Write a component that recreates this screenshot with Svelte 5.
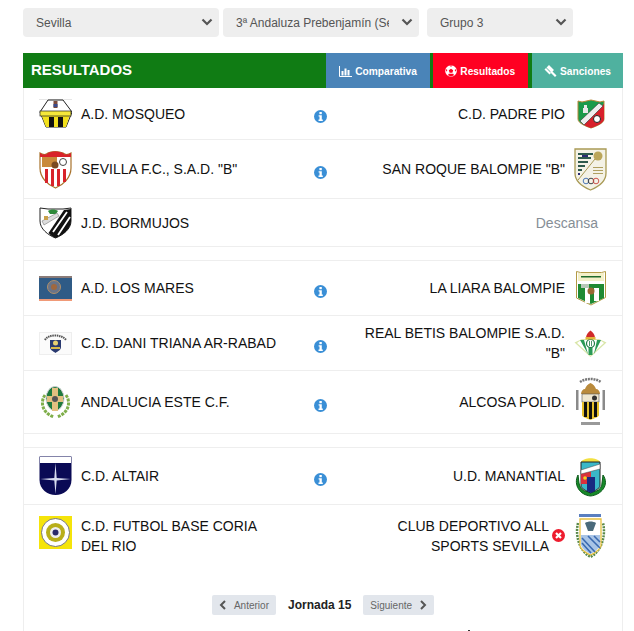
<script>
  const selects = [
    { cls: 'w1', options: ['Sevilla'] },
    { cls: 'w2', options: ['3ª Andaluza Prebenjamín (Sevilla)'] },
    { cls: 'w3', options: ['Grupo 3'] }
  ];
  const groups = [
    [
      { h: 52, home: 'A.D. MOSQUEO', hl: 'mosqueo', away: 'C.D. PADRE PIO', al: 'padre', status: 'info' },
      { h: 59, home: 'SEVILLA F.C., S.A.D. "B"', hl: 'sevilla', away: 'SAN ROQUE BALOMPIE "B"', al: 'roque', status: 'info' },
      { h: 48, home: 'J.D. BORMUJOS', hl: 'bormujos', rest: true }
    ],
    [
      { h: 55, home: 'A.D. LOS MARES', hl: 'mares', away: 'LA LIARA BALOMPIE', al: 'liara', status: 'info' },
      { h: 55, home: 'C.D. DANI TRIANA AR-RABAD', hl: 'dani', away: 'REAL BETIS BALOMPIE S.A.D. "B"', al: 'betis', status: 'info' },
      { h: 63, home: 'ANDALUCIA ESTE C.F.', hl: 'este', away: 'ALCOSA POLID.', al: 'alcosa', status: 'info' }
    ],
    [
      { h: 57, home: 'C.D. ALTAIR', hl: 'altair', away: 'U.D. MANANTIAL', al: 'manantial', status: 'info' },
      { h: 61, last: true, home: 'C.D. FUTBOL BASE CORIA DEL RIO', hl: 'coria', away: 'CLUB DEPORTIVO ALL SPORTS SEVILLA', al: 'allsports', status: 'x' }
    ]
  ];
</script>

{#snippet logo(name)}
  {#if name === 'mosqueo'}
    <svg class="logo" width="33" height="29" viewBox="0 0 33 29">
      <rect x="0" y="0" width="33" height="1" fill="#e6e6e6"/>
      <path d="M9 1h15l9 12-6 15H7L1 13z" fill="#fff" stroke="#222" stroke-width="1"/>
      <path d="M1 12h31l-5 16H7z" fill="#f2e01c"/>
      <rect x="1" y="12" width="31" height="5" fill="#f5e83a" stroke="#222" stroke-width=".7"/>
      <path d="M10 18h5v10h-5zM19 18h5v10h-5z" fill="#111"/>
      <rect x="14.500" y="2" width="4" height="7" fill="#7a4a3a"/>
      <rect x="14.500" y="5" width="4" height="3" fill="#3a4a8a"/>
    </svg>
  {:else if name === 'padre'}
    <svg class="logo" width="28" height="30" viewBox="0 0 28 30">
      <path d="M1 2l4 1 9-2 9 2 4-1v18c0 4-7 7-13 9C8 27 1 24 1 20z" fill="#1a9a4a" stroke="#b8893a" stroke-width="1"/>
      <path d="M27 5v15c0 4-7 7-13 9-3-1-6-2-8-4z" fill="#d8202a"/>
      <path d="M3 22L22 4l4 3L7 26z" fill="#eee" stroke="#333" stroke-width=".6"/>
      <path d="M7 6h3v3h1v5H6V9h1z" fill="#e8e8e8"/>
      <circle cx="20" cy="20" r="3.500" fill="#fff" stroke="#222"/>
    </svg>
  {:else if name === 'sevilla'}
    <svg class="logo" width="33" height="39" viewBox="0 0 33 39">
      <path d="M1 3c3 2 6 2 8 0 3-2 11-2 15 0 2 2 5 2 8 0v15c0 10-8 17-15.500 20C9 35 1 28 1 18z" fill="#fff" stroke="#a8722c" stroke-width="1.200"/>
      <path d="M1 3c3 2 6 2 8 0 3-2 11-2 15 0 2 2 5 2 8 0v4H1z" fill="#d8232a"/>
      <path d="M6 19h3v14H6zM12 19h3v17h-3zM18 19h3v17h-3zM24 19h3v13h-3z" fill="#d8232a"/>
      <rect x="3" y="7" width="15" height="10" fill="#c98a3a"/>
      <circle cx="16" cy="15" r="3.500" fill="#7a4a20"/>
      <circle cx="24" cy="12" r="3.500" fill="#fff" stroke="#444"/>
    </svg>
  {:else if name === 'roque'}
    <svg class="logo" width="33" height="43" viewBox="0 0 33 43">
      <path d="M1 1h31v24c0 9-8 14-15.500 17C9 39 1 34 1 25z" fill="#f4f2e6" stroke="#a99a55" stroke-width="1.300"/>
      <path d="M4 5h15v2H4zM4 9h13v2H4zM4 13h10v2H4zM4 17h7v2H4zM4 21h4v2H4z" fill="#2e5a4c"/>
      <path d="M4 25h2v2H4zM8 7h6v2H8z" fill="#2a2a70"/>
      <circle cx="24" cy="8" r="4.500" fill="#bba65a"/>
      <path d="M21 11L4 32" stroke="#a99a55" stroke-width="1"/>
      <g fill="none" stroke-width=".9">
        <circle cx="12" cy="33" r="2.800" stroke="#3a6ab0"/>
        <circle cx="17" cy="33" r="2.800" stroke="#333"/>
        <circle cx="22" cy="33" r="2.800" stroke="#c8443c"/>
      </g>
      <path d="M19 19h10v1H19zM19 22h10v1H19zM19 25h10v1H19z" fill="#b0a060"/>
    </svg>
  {:else if name === 'bormujos'}
    <svg class="logo" width="33" height="32" viewBox="0 0 33 32">
      <path d="M1 1l8 1h15l8-1v13c0 8-8 14-15.500 17C9 28 1 22 1 14z" fill="#fff" stroke="#222" stroke-width="1"/>
      <path d="M32 2v12c0 8-8 14-15.500 17-3-1-5-3-7-5L25 3z" fill="#111"/>
      <path d="M14 25L28 5M19 28L31 10" stroke="#fff" stroke-width="1.800"/>
      <path d="M9 4c3-2 7-2 10 0l-2 3h-6z" fill="#2e8a3a"/>
      <path d="M3 14L18 6l2 3L5 18z" fill="#ddd" stroke="#666" stroke-width=".5"/>
      <rect x="5" y="9" width="4" height="4" fill="#c9a04a"/>
    </svg>
  {:else if name === 'mares'}
    <svg class="logo" width="33" height="25" viewBox="0 0 33 25">
      <rect width="33" height="25" fill="#2f5b86"/>
      <rect width="33" height="2" fill="#8a7b78"/>
      <rect y="23" width="33" height="2" fill="#f09a78"/>
      <circle cx="15" cy="11" r="6.500" fill="#6a7488" stroke="#b0906a"/>
      <circle cx="15" cy="11" r="3" fill="#a0683f"/>
    </svg>
  {:else if name === 'liara'}
    <svg class="logo" width="30" height="35" viewBox="0 0 30 35">
      <path d="M.5 .5l4 1h21l4-1v26L15 34 .5 27z" fill="#fff" stroke="#b39a45"/>
      <path d="M2 2h26v8H2z" fill="#f4f0c8"/>
      <path d="M5 5h20v1.500H5z" fill="#1f6a2a"/>
      <path d="M2 13h26v14l-13 6-13-6z" fill="#1f8a33"/>
      <path d="M9 17h5v15H9zM18 17h5v13h-5z" fill="#fff"/>
      <circle cx="15" cy="20" r="3.500" fill="#9a6a35"/>
      <rect x="5" y="13" width="8" height="4" fill="#b8c8b8"/>
    </svg>
  {:else if name === 'dani'}
    <svg class="logo" width="33" height="23" viewBox="0 0 33 23">
      <rect x=".5" y=".5" width="32" height="22" fill="#fbfbfb" stroke="#eee"/>
      <path d="M6 8c3-6 17-6 21 0" fill="none" stroke="#555" stroke-width="2" stroke-dasharray="1.500 .7"/>
      <path d="M11 8h11v7c0 3-3 4-5.500 6C14 19 11 18 11 15z" fill="#2a3a70"/>
      <circle cx="16.500" cy="11" r="2.500" fill="#e8d070"/>
      <path d="M12 16h9" stroke="#d8b848" stroke-width="2"/>
    </svg>
  {:else if name === 'betis'}
    <svg class="logo" width="33" height="27" viewBox="0 0 33 27">
      <path d="M.5 12.500L8 9h17l7.500 3.500L16.500 27z" fill="#d9e6a8"/>
      <path d="M7 10h19l4 3-13.500 12.500L3 13z" fill="#fff"/>
      <path d="M6 10h4l4 14zM23 10h4l-7 14zM14.500 9h4v16h-4z" fill="#2a9a56"/>
      <circle cx="16.500" cy="13.500" r="4" fill="#fff" stroke="#1e7a44" stroke-width="1.200"/>
      <path d="M15.500 11v5M17.500 11v5" stroke="#1e7a44" stroke-width=".8"/>
      <path d="M12 8c0-3 2-6 4.500-7.500C19 2 21 5 21 8z" fill="#d02a2a"/>
      <rect x="11.500" y="7" width="10" height="2.500" fill="#e2b53a"/>
    </svg>
  {:else if name === 'este'}
    <svg class="logo" width="33" height="33" viewBox="0 0 33 33">
      <path d="M6 9C1 16 3 27 15 31M27 9c5 7 3 18-9 22" fill="none" stroke="#7fae4a" stroke-width="3" stroke-dasharray="3 1"/>
      <ellipse cx="16" cy="12.500" rx="9" ry="12" fill="#1e7a3e" stroke="#ccc"/>
      <path d="M13 2h6v8h5v6h-5v9h-6v-9H8v-6h5z" fill="#e2c080"/>
      <circle cx="16" cy="13" r="3" fill="#555"/>
    </svg>
  {:else if name === 'alcosa'}
    <svg class="logo" width="31" height="50" viewBox="0 0 31 50">
      <path d="M5 5c6-4 15-4 21 0" fill="none" stroke="#777" stroke-width="2.500" stroke-dasharray="2 .8"/>
      <path d="M1 13h2.500v20H1zM27.500 13H30v20h-2.500z" fill="#8a8a8a"/>
      <path d="M6 17c0-3 2-5 4-5 1-3 3-5 5.500-6 2.500 1 4.500 3 5.500 6 2 0 4 2 4 5z" fill="#b98a3c"/>
      <rect x="7" y="17" width="17" height="8" fill="#efe7d0" stroke="#555" stroke-width=".6"/>
      <circle cx="19.500" cy="21" r="2.500" fill="#333"/>
      <path d="M7 25h17v13c0 2-4 3-8.500 5C11 41 7 40 7 38z" fill="#e6c02a"/>
      <path d="M9 25h3v15H9zM14 25h3v17h-3zM19 25h3v15h-3z" fill="#111"/>
      <rect x="6" y="45" width="19" height="3" fill="#999"/>
    </svg>
  {:else if name === 'altair'}
    <svg class="logo" width="33" height="40" viewBox="0 0 33 40">
      <path d="M.5 .5h32V24c0 9-8 15-16 15S.5 33 .5 24z" fill="#0a0a55"/>
      <rect x="1" y="1" width="31" height="6" fill="#fff"/>
      <path d="M16.500 7l1.200 15 14 1-14 1.500L16.500 38l-1.200-13.500-14-1.500 14-1z" fill="#d8dcf0"/>
    </svg>
  {:else if name === 'manantial'}
    <svg class="logo" width="33" height="42" viewBox="0 0 33 42">
      <path d="M4 20c-5 10 2 20 12.500 21C27 40 36 30 29 20l-1 8c0 6-5 9-11.500 9S6 34 5 28z" fill="#178a2a" stroke="#0c5a1a"/>
      <path d="M7 7c3-5 16-5 19 0z" fill="#f2e040"/>
      <path d="M7 7h19v24c0 2-5 5-9.500 7C12 36 7 33 7 31z" fill="#3ab8c8" stroke="#222"/>
      <path d="M7 17h10v12H7z" fill="#d8303a"/>
      <path d="M13 22h8v14l-4 2-4-2z" fill="#182a80"/>
      <path d="M7 15L26 9v5L7 19z" fill="#fff" stroke="#444" stroke-width=".5"/>
      <circle cx="11" cy="23" r="1.800" fill="#f2d020"/>
    </svg>
  {:else if name === 'coria'}
    <svg class="logo" width="33" height="39" viewBox="0 0 33 39">
      <rect y="0" width="33" height="33" fill="#f5e40a"/>
      <circle cx="16.500" cy="16.500" r="14" fill="#fff" stroke="#777"/>
      <circle cx="16.500" cy="16.500" r="9.500" fill="#b8ae1a"/>
      <circle cx="16.500" cy="16.500" r="5.500" fill="#eee"/>
      <circle cx="16.500" cy="16.500" r="3" fill="#2a2a6a"/>
    </svg>
  {:else if name === 'allsports'}
    <svg class="logo" width="33" height="46" viewBox="0 0 33 46">
      <rect x="5" y="1" width="22" height="3" fill="#5a7fc0"/>
      <path d="M4 10c-3 12 1 28 12.500 34C28 38 32 22 29 10" fill="none" stroke="#5a8a4a" stroke-width="2.500" stroke-dasharray="2 1"/>
      <path d="M6 6h21v27c-2 5-6 7-10.500 9C12 40 8 38 6 33z" fill="#fff" stroke="#e6c040" stroke-width="1.300"/>
      <path d="M11 10c3-2 8-2 11 0l-3 8h-5z" fill="#4a6a7a"/>
      <path d="M7 22h19v10c-2 5-6 7-9.500 9C13 39 9 37 7 32z" fill="#a8c4e6"/>
      <path d="M8 25l13 14M8 30l9 10M14 23l12 12M20 23l6 6" stroke="#3a6ab0" stroke-width="1.600"/>
    </svg>
  {/if}
{/snippet}

{#snippet statusIcon(kind)}
  {#if kind === 'x'}
    <svg class="xmark" width="13" height="13" viewBox="0 0 13 13" aria-hidden="true">
      <circle cx="6.500" cy="6.500" r="6.500" fill="#ee1c2e"/>
      <path d="M4 4l5 5M9 4l-5 5" stroke="#fff" stroke-width="2.200"/>
    </svg>
  {:else}
    <svg class="info" width="13" height="13" viewBox="0 0 13 13" aria-hidden="true">
      <circle cx="6.500" cy="6.500" r="6.500" fill="#3a8fd6"/>
      <rect x="5.400" y="2" width="2.400" height="2.200" fill="#fff"/>
      <path d="M4.600 5.200h3.200v4.400h1v1.300H4.500V9.600h1V6.500h-.9z" fill="#fff"/>
    </svg>
  {/if}
{/snippet}

<main class="page">
  <div class="filters">
    {#each selects as s}
      <label class="select {s.cls}">
        <select>
          {#each s.options as o}<option>{o}</option>{/each}
        </select>
        <svg class="caret" width="12" height="8" viewBox="0 0 12 8" aria-hidden="true">
          <path d="M1.500 1.500L6 6l4.500-4.500" fill="none" stroke="#555" stroke-width="2.200"/>
        </svg>
      </label>
    {/each}
  </div>

  <section class="panel">
    <header class="head">
      <h1>RESULTADOS</h1>
      <nav class="tabs">
        <a class="tab blue">
          <svg width="13" height="11" viewBox="0 0 13 11" aria-hidden="true">
            <path d="M.5 0v10.500H13" fill="none" stroke="#fff"/>
            <path d="M2.500 5h2v4.500h-2zM5.500 2.500h2v7h-2zM8.500 4h2v5.500h-2z" fill="#fff"/>
          </svg>
          Comparativa
        </a>
        <a class="tab red">
          <svg width="12" height="12" viewBox="0 0 12 12" aria-hidden="true">
            <circle cx="6" cy="6" r="5.800" fill="#fff"/>
            <path d="M6 3.700l2.200 1.600-.8 2.500H4.600l-.8-2.500zM4.200 .6L6 1.800 7.800 .6zM.8 4l.3 2.800 1.300-1.700zM11.200 4l-.3 2.800-1.300-1.700zM3 10.200l.7-1.500h4.600l.7 1.500L6 11.400z" fill="#ff0022"/>
          </svg>
          Resultados
        </a>
        <a class="tab teal">
          <svg width="13" height="12" viewBox="0 0 13 12" aria-hidden="true">
            <path d="M5 0l5 5-2.500 2.500-5-5zM6 7l1.800-1.200L12.500 10.500 11 12z" fill="#fff"/>
            <path d="M2 3l5 5-1.500 1.500-5-5z" fill="#fff"/>
          </svg>
          Sanciones
        </a>
      </nav>
    </header>

    {#each groups as rows, g}
      {#if g > 0}<div class="spacer"></div>{/if}
      {#each rows as r}
        <div class="row" class:last={r.last} style="height: {r.h}px">
          <div class="badge">{@render logo(r.hl)}</div>
          <div class="name">{r.home}</div>
          {#if r.rest}
            <div class="rest">Descansa</div>
          {:else}
            <div class="mid">{#if r.status === 'info'}{@render statusIcon('info')}{/if}</div>
            <div class="name away">
              <span>{r.away}</span>
              {#if r.status === 'x'}{@render statusIcon('x')}{/if}
            </div>
            <div class="badge">{@render logo(r.al)}</div>
          {/if}
        </div>
      {/each}
    {/each}

    <div class="pager">
      <button class="nav">
        <svg width="8" height="10" viewBox="0 0 8 10" aria-hidden="true"><path d="M6 1L2 5l4 4" fill="none" stroke="#555" stroke-width="2"/></svg>
        <span>Anterior</span>
      </button>
      <strong>Jornada 15</strong>
      <button class="nav">
        <span>Siguiente</span>
        <svg width="8" height="10" viewBox="0 0 8 10" aria-hidden="true"><path d="M2 1l4 4-4 4" fill="none" stroke="#555" stroke-width="2"/></svg>
      </button>
    </div>
  </section>
  <i class="speck"></i>
</main>

<style>
  :global(body) {
    margin: 0;
    background: #fff;
    font-family: "Liberation Sans", Arial, sans-serif;
    color: #111;
    overflow: hidden;
  }
  .page {
    position: relative;
    width: 634px;
    height: 631px;
    padding: 8px 11px 0 23px;
    box-sizing: border-box;
    overflow: hidden;
  }
  .speck {
    position: absolute;
    left: 468px;
    top: 630px;
    width: 2px;
    height: 1px;
    background: #333;
  }
  .filters {
    display: flex;
    height: 29px;
    margin-bottom: 16px;
  }
  .select {
    position: relative;
    display: block;
    height: 29px;
  }
  .w1 { width: 196px; }
  .w2 { width: 196px; margin-left: 4px; }
  .w3 { width: 146px; margin-left: 8px; }
  select {
    appearance: none;
    width: 100%;
    height: 100%;
    border: 0;
    border-radius: 4px;
    background: #eee;
    color: #555;
    font: 12px "Liberation Sans", Arial, sans-serif;
    padding: 0 30px 0 13px;
    outline: 0;
  }
  .caret {
    position: absolute;
    right: 6px;
    top: 10px;
    pointer-events: none;
  }
  .panel {
    border-right: 1px solid #eee;
    border-left: 1px solid #eee;
    padding-bottom: 40px;
  }
  .head {
    display: flex;
    justify-content: space-between;
    align-items: stretch;
    height: 35px;
    background: #107c14;
    margin: 0 -1px 0 -1px;
  }
  h1 {
    margin: 0;
    padding-left: 8px;
    font-size: 15px;
    line-height: 33px;
    font-weight: bold;
    color: #fff;
  }
  .tabs { display: flex; }
  .tab {
    display: flex;
    align-items: center;
    justify-content: center;
    gap: 3px;
    color: #fff;
    font-size: 10.2px;
    font-weight: bold;
    padding-top: 1px;
    box-sizing: border-box;
  }
  .blue { width: 104px; background: #4a84b8; }
  .red { width: 94.500px; margin-left: 3px; background: #ff0022; }
  .teal { width: 91px; margin-left: 4.500px; background: #4fb19f; }
  .row {
    display: grid;
    grid-template-columns: 33px 214px 60px 228px 33px;
    align-items: center;
    padding-left: 15px;
    border-bottom: 1px solid #eee;
    box-sizing: border-box;
    font-size: 14px;
    line-height: 20px;
  }
  .row.last { border-bottom: 0; }
  .badge {
    display: flex;
    justify-content: center;
    align-items: center;
  }
  .logo { display: block; }
  .name { margin-left: 9px; }
  .mid {
    display: flex;
    align-items: center;
    padding: 6px 0 0 28px;
  }
  .info { display: block; }
  .away {
    display: flex;
    justify-content: flex-end;
    align-items: center;
    text-align: right;
    margin: 0 9px 0 0;
  }
  .xmark { flex: none; margin-left: 3px; }
  .rest {
    grid-column: 3 / 6;
    justify-self: end;
    padding-right: 9px;
    color: #868e96;
    font-size: 14px;
  }
  .spacer {
    height: 14px;
    border-bottom: 1px solid #eee;
    box-sizing: border-box;
  }
  .pager {
    display: flex;
    justify-content: center;
    align-items: center;
    gap: 12px;
    margin: 29px 0 0 0;
    height: 20px;
  }
  .nav {
    display: flex;
    align-items: center;
    gap: 7px;
    height: 20px;
    padding: 0 7px;
    border: 0;
    border-radius: 2px;
    background: #e2e6ec;
    color: #666;
    font: 10px "Liberation Sans", Arial, sans-serif;
  }
  strong { font-size: 12px; color: #222; }
</style>
